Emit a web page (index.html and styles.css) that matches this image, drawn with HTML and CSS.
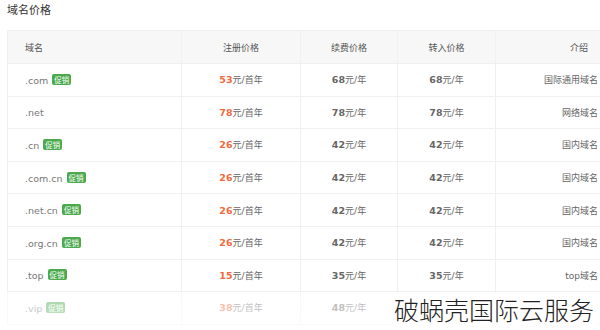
FILE: index.html
```html
<!DOCTYPE html>
<html lang="zh-CN">
<head>
<meta charset="utf-8">
<title>域名价格</title>
<link rel="stylesheet" href="styles.css">
</head>
<body>
<div class="page">
  <h3 class="title">域名价格</h3>
  <table class="prices">
    <colgroup>
      <col class="w-name">
      <col class="w-reg">
      <col class="w-renew">
      <col class="w-trans">
      <col class="w-intro">
    </colgroup>
    <thead>
      <tr>
        <th class="c-name">域名</th>
        <th>注册价格</th>
        <th>续费价格</th>
        <th>转入价格</th>
        <th class="c-intro">介绍</th>
      </tr>
    </thead>
    <tbody>
      <tr>
        <td class="c-name">.com <span class="tag">促销</span></td>
        <td><b class="hot">53</b>元/首年</td>
        <td><b>68</b>元/年</td>
        <td><b>68</b>元/年</td>
        <td class="c-intro">国际通用域名</td>
      </tr>
      <tr>
        <td class="c-name">.net</td>
        <td><b class="hot">78</b>元/首年</td>
        <td><b>78</b>元/年</td>
        <td><b>78</b>元/年</td>
        <td class="c-intro">网络域名</td>
      </tr>
      <tr>
        <td class="c-name">.cn <span class="tag">促销</span></td>
        <td><b class="hot">26</b>元/首年</td>
        <td><b>42</b>元/年</td>
        <td><b>42</b>元/年</td>
        <td class="c-intro">国内域名</td>
      </tr>
      <tr>
        <td class="c-name">.com.cn <span class="tag">促销</span></td>
        <td><b class="hot">26</b>元/首年</td>
        <td><b>42</b>元/年</td>
        <td><b>42</b>元/年</td>
        <td class="c-intro">国内域名</td>
      </tr>
      <tr>
        <td class="c-name">.net.cn <span class="tag">促销</span></td>
        <td><b class="hot">26</b>元/首年</td>
        <td><b>42</b>元/年</td>
        <td><b>42</b>元/年</td>
        <td class="c-intro">国内域名</td>
      </tr>
      <tr>
        <td class="c-name">.org.cn <span class="tag">促销</span></td>
        <td><b class="hot">26</b>元/首年</td>
        <td><b>42</b>元/年</td>
        <td><b>42</b>元/年</td>
        <td class="c-intro">国内域名</td>
      </tr>
      <tr>
        <td class="c-name">.top <span class="tag">促销</span></td>
        <td><b class="hot">15</b>元/首年</td>
        <td><b>35</b>元/年</td>
        <td><b>35</b>元/年</td>
        <td class="c-intro">top域名</td>
      </tr>
      <tr>
        <td class="c-name">.vip <span class="tag">促销</span></td>
        <td><b class="hot">38</b>元/首年</td>
        <td><b>48</b>元/年</td>
        <td><b>48</b>元/年</td>
        <td class="c-intro">vip域名</td>
      </tr>
    </tbody>
  </table>
  <div class="fade"></div>
  <div class="watermark">破蜗壳国际云服务</div>
</div>
</body>
</html>
```
FILE: styles.css
```css
html, body {
  margin: 0;
  padding: 0;
  background: #fff;
  overflow: hidden;
}
.page {
  position: relative;
  width: 600px;
  height: 330px;
  overflow: hidden;
  font-family: "DejaVu Sans", "Noto Sans CJK SC", sans-serif;
  color: #666;
}
.title {
  margin: 0;
  padding: 2px 0 0 7px;
  height: 28px;
  font-family: "Noto Sans CJK SC", sans-serif;
  font-size: 11px;
  font-weight: 400;
  line-height: 14px;
  color: #333;
}
.prices {
  margin-left: 7px;
  width: 600px;
  border-collapse: collapse;
  table-layout: fixed;
  font-size: 9px;
}
.w-name { width: 174px; }
.w-reg { width: 119px; }
.w-renew { width: 97px; }
.w-trans { width: 98px; }
.w-intro { width: 112px; }
.prices th,
.prices td {
  padding: 0;
  border: 1px solid #f0f0f0;
  text-align: center;
  white-space: nowrap;
  overflow: hidden;
  font-family: "DejaVu Sans", "Noto Sans CJK SC", sans-serif;
}
.prices th {
  height: 32px;
  background: #f7f7f7;
  font-family: "Noto Sans CJK SC", sans-serif;
  font-weight: 400;
  font-size: 9px;
  color: #555;
}
.prices td {
  height: 31.6px;
}
.prices .c-name {
  padding-left: 17px;
  text-align: left;
}
.prices th.c-intro {
  text-align: right;
  padding-right: 19px;
}
.prices td.c-intro {
  text-align: right;
  padding-right: 9px;
}
td.c-name {
  font-size: 9.5px;
  color: #777;
}
td b {
  font-weight: 700;
  font-size: 9.5px;
  color: #666;
}
td b.hot {
  color: #f06a3c;
}
.tag {
  display: inline-block;
  vertical-align: 1px;
  margin-left: 1px;
  padding: 0 2px;
  height: 11px;
  line-height: 11px;
  border-radius: 2px;
  background: #4aa94c;
  color: #fff;
  font-family: "Noto Sans CJK SC", sans-serif;
  font-size: 7.5px;
}
.fade {
  position: absolute;
  left: 0;
  right: 0;
  top: 292px;
  bottom: 0;
  background: linear-gradient(rgba(255,255,255,0.5), rgba(255,255,255,0.7));
}
.watermark {
  position: absolute;
  left: 391px;
  top: 293px;
  padding: 0 3px;
  height: 32px;
  line-height: 32px;
  white-space: nowrap;
  background: #fff;
  font-family: "Noto Sans CJK SC", sans-serif;
  font-weight: 300;
  font-size: 25px;
  color: #222;
}
```
